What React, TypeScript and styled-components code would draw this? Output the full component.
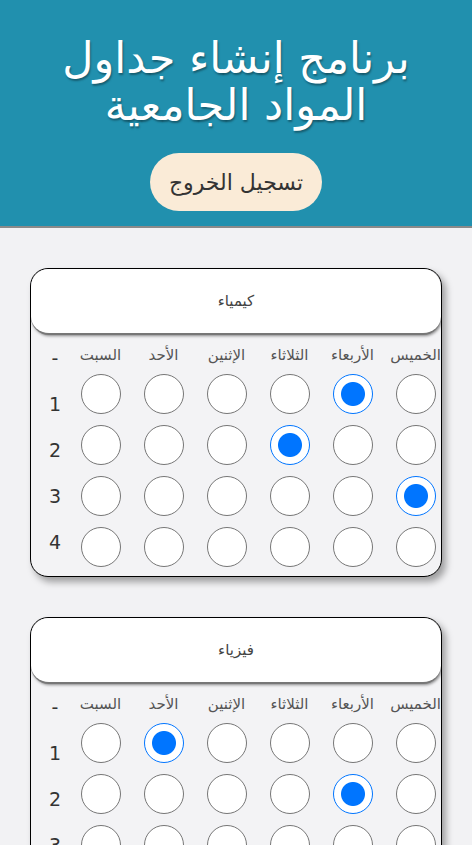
import React, { FC, useState } from "react";
import styled, { createGlobalStyle } from "styled-components";

const COLORS = {
  teal: "#2190ae",
  page: "#f2f2f4",
  cream: "#faebd7",
  text: "#333333",
  label: "#555555",
  blue: "#0075ff",
  ring: "#767676",
};

const FONT = `"DejaVu Sans", "Noto Sans", sans-serif`;

const DAYS = ["السبت", "الأحد", "الإثنين", "الثلاثاء", "الأربعاء", "الخميس"];
const PERIODS = [1, 2, 3, 4];

interface SubjectType {
  name: string;
  // picked period (1-based) for each day, 0 = none
  picks: number[];
}

const SUBJECTS: SubjectType[] = [
  { name: "كيمياء", picks: [0, 0, 0, 2, 1, 3] },
  { name: "فيزياء", picks: [0, 1, 0, 0, 2, 0] },
];

const GlobalStyle = createGlobalStyle`
  body {
    margin: 0;
    background: ${COLORS.page};
    font-family: ${FONT};
  }
`;

const SubjectCard: FC<{ subject: SubjectType }> = ({ subject }) => {
  const [picks, setPicks] = useState(subject.picks);

  return (
    <Card>
      <CardHeader>{subject.name}</CardHeader>
      <CardBody>
        <NumberColumn>
          <NumberCell>-</NumberCell>
          {PERIODS.map((p) => (
            <NumberCell key={p}>{p}</NumberCell>
          ))}
        </NumberColumn>
        {DAYS.map((day, d) => (
          <DayColumn key={day}>
            <DayLabel>{day}</DayLabel>
            {PERIODS.map((p) => (
              <Radio
                key={p}
                type="radio"
                name={`${subject.name}-${d}`}
                checked={picks[d] === p}
                onChange={() => setPicks(picks.map((v, i) => (i === d ? p : v)))}
              />
            ))}
          </DayColumn>
        ))}
      </CardBody>
    </Card>
  );
};

const App: FC = () => {
  return (
    <>
      <GlobalStyle />
      <Header>
        <Title>
          برنامج إنشاء جداول
          <br />
          المواد الجامعية
        </Title>
        <LogoutButton>تسجيل الخروج</LogoutButton>
      </Header>
      <Main>
        {SUBJECTS.map((s) => (
          <SubjectCard key={s.name} subject={s} />
        ))}
      </Main>
    </>
  );
};

const Header = styled.header`
  height: 228px;
  background-color: ${COLORS.teal};
  border-bottom: 2px solid #8a8a8a;
  display: flex;
  flex-direction: column;
  align-items: center;
  padding-top: 35px;
  box-sizing: border-box;
`;

const Title = styled.h1`
  margin: 0;
  color: #ffffff;
  font-family: ${FONT};
  font-weight: 400;
  font-size: 43px;
  line-height: 47px;
  text-align: center;
  text-shadow: 1px 2px 2px rgba(0, 0, 0, 0.35);
`;

const LogoutButton = styled.button`
  margin-top: 24px;
  width: 172px;
  height: 58px;
  border: none;
  border-radius: 29px;
  background-color: ${COLORS.cream};
  color: ${COLORS.text};
  font-family: ${FONT};
  font-size: 22px;
  cursor: pointer;
`;

const Main = styled.main`
  display: flex;
  flex-direction: column;
  align-items: center;
  gap: 40px;
  padding: 40px 0 40px;
`;

const Card = styled.section`
  width: 412px;
  box-sizing: border-box;
  border: 1px solid #000;
  border-radius: 18px;
  background: #f3f3f5;
  box-shadow: 4px 5px 7px rgba(0, 0, 0, 0.35);
  overflow: hidden;
`;

const CardHeader = styled.div`
  height: 64px;
  display: flex;
  align-items: center;
  justify-content: center;
  background: #ffffff;
  border-radius: 18px;
  border-bottom: 2px solid #777;
  box-shadow: 1px 1px 3px rgba(0, 0, 0, 0.45);
  font-family: ${FONT};
  font-size: 15px;
  color: #444;
`;

const CardBody = styled.div`
  display: flex;
  padding-bottom: 9px;
`;

const NumberColumn = styled.div`
  width: 38px;
  box-sizing: border-box;
  flex-shrink: 0;
  display: flex;
  flex-direction: column;
  padding-left: 10px;
`;

const NumberCell = styled.div`
  height: 46px;
  display: flex;
  align-items: center;
  justify-content: center;
  font-family: ${FONT};
  font-size: 19px;
  color: ${COLORS.text};
`;

const DayColumn = styled.div`
  width: 63px;
  flex-shrink: 0;
  display: flex;
  flex-direction: column;
  align-items: center;
  gap: 11px;
  padding-top: 9px;
`;

const DayLabel = styled.div`
  height: 22px;
  margin-bottom: -3px;
  display: flex;
  align-items: center;
  white-space: nowrap;
  font-family: ${FONT};
  font-size: 15px;
  color: ${COLORS.label};
`;

const Radio = styled.input`
  appearance: none;
  margin: 0;
  width: 40px;
  height: 40px;
  border-radius: 50%;
  border: 1px solid ${COLORS.ring};
  background: #ffffff;
  box-sizing: border-box;
  cursor: pointer;

  &:checked {
    border-color: ${COLORS.blue};
    background: radial-gradient(circle, ${COLORS.blue} 0 11.5px, #ffffff 12.5px);
  }
`;

export default App;
